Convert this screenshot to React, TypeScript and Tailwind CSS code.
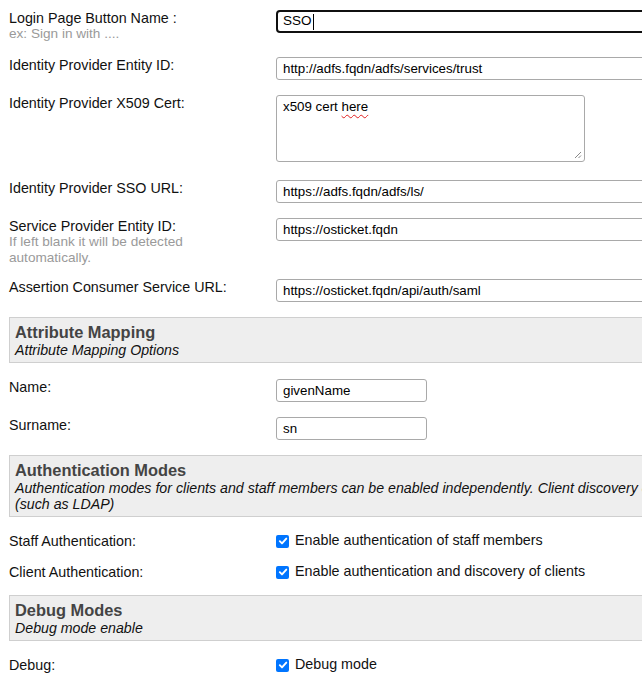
import React from "react";

function TextBox({ value, focused, width = "w-[440px]" }: { value: string; focused?: boolean; width?: string }) {
  if (focused) {
    return (
      <div className={`${width} shrink-0 h-[23px] border-2 border-[#101010] rounded-[4px] bg-white px-[5px] flex items-center text-[13.5px] text-black`}>
        <span>{value}</span>
        <span className="inline-block w-px h-[16px] bg-black ml-[1px]" />
      </div>
    );
  }
  return (
    <div className={`${width} shrink-0 h-[23px] border border-[#a9a9a9] rounded-[3px] bg-white px-[6px] flex items-center text-[13.33px] text-black whitespace-nowrap overflow-hidden`}>
      {value}
    </div>
  );
}

function Label({ children, hint }: { children: React.ReactNode; hint?: React.ReactNode }) {
  return (
    <div className="w-[267px] shrink-0 leading-[16px]">
      <div className="text-[#111]">{children}</div>
      {hint && <div className="text-[#9a9a9a] text-[13.6px] leading-[16px]">{hint}</div>}
    </div>
  );
}

function Section({ title, sub }: { title: string; sub: React.ReactNode }) {
  return (
    <div className="w-[1000px] shrink-0 border border-[#cfcfcf] bg-[#eeeeee] px-[5px] pt-[4px] pb-[4px]">
      <div className="text-[16.4px] font-bold leading-[20px] text-[#444]">{title}</div>
      <div className="italic text-[14.2px] leading-[16px] text-[#111] whitespace-nowrap">{sub}</div>
    </div>
  );
}

function Check({ label }: { label: string }) {
  return (
    <div className="flex items-center h-[16px]">
      <span className="w-[13px] h-[13px] shrink-0 rounded-[2px] bg-[#0075ff] flex items-center justify-center">
        <svg width="10" height="10" viewBox="0 0 10 10">
          <path d="M1.8 5.2 L4 7.4 L8.3 2.6" fill="none" stroke="white" strokeWidth="1.9" strokeLinecap="round" strokeLinejoin="round" />
        </svg>
      </span>
      <span className="ml-[6px] text-[#111] whitespace-nowrap">{label}</span>
    </div>
  );
}

export default function App() {
  return (
    <div className="w-[642px] h-[679px] overflow-hidden bg-white font-['Liberation_Sans',Arial,sans-serif] text-[14.3px] text-black">
      <div className="pl-[9px] pt-[10px]">
        <div className="flex h-[47px]">
          <Label hint="ex: Sign in with ....">Login Page Button Name :</Label>
          <TextBox value="SSO" focused />
        </div>
        <div className="flex h-[38px]">
          <Label>Identity Provider Entity ID:</Label>
          <TextBox value="http://adfs.fqdn/adfs/services/trust" />
        </div>
        <div className="flex h-[85px]">
          <Label>Identity Provider X509 Cert:</Label>
          <div className="relative w-[309px] shrink-0 h-[67px] border border-[#a9a9a9] rounded-[3px] bg-white px-[6px] pt-[3px] leading-[16px] text-[13.33px]">
            x509 cert{" "}
            <span className="underline decoration-wavy decoration-[#e02020] decoration-1 underline-offset-[3px]">here</span>
            <svg className="absolute right-[2px] bottom-[2px]" width="9" height="9" viewBox="0 0 9 9">
              <path d="M8 2 L2 8 M8 5.5 L5.5 8" stroke="#888" strokeWidth="1" />
            </svg>
          </div>
        </div>
        <div className="flex h-[38px]">
          <Label>Identity Provider SSO URL:</Label>
          <TextBox value="https://adfs.fqdn/adfs/ls/" />
        </div>
        <div className="flex h-[61px]">
          <Label
            hint={
              <>
                If left blank it will be detected
                <br />
                automatically.
              </>
            }
          >
            Service Provider Entity ID:
          </Label>
          <TextBox value="https://osticket.fqdn" />
        </div>
        <div className="flex h-[38px]">
          <Label>Assertion Consumer Service URL:</Label>
          <TextBox value="https://osticket.fqdn/api/auth/saml" />
        </div>

        <Section title="Attribute Mapping" sub="Attribute Mapping Options" />

        <div className="flex h-[38px] mt-[16px]">
          <Label>Name:</Label>
          <TextBox value="givenName" width="w-[151px]" />
        </div>
        <div className="flex h-[38px]">
          <Label>Surname:</Label>
          <TextBox value="sn" width="w-[151px]" />
        </div>

        <Section
          title="Authentication Modes"
          sub={
            <>
              Authentication modes for clients and staff members can be enabled independently. Client discovery can be supported via a separate backend
              <br />
              (such as LDAP)
            </>
          }
        />

        <div className="flex h-[31px] mt-[16px]">
          <Label>Staff Authentication:</Label>
          <Check label="Enable authentication of staff members" />
        </div>
        <div className="flex h-[31px]">
          <Label>Client Authentication:</Label>
          <Check label="Enable authentication and discovery of clients" />
        </div>

        <Section title="Debug Modes" sub="Debug mode enable" />

        <div className="flex h-[31px] mt-[16px]">
          <Label>Debug:</Label>
          <Check label="Debug mode" />
        </div>
      </div>
    </div>
  );
}
